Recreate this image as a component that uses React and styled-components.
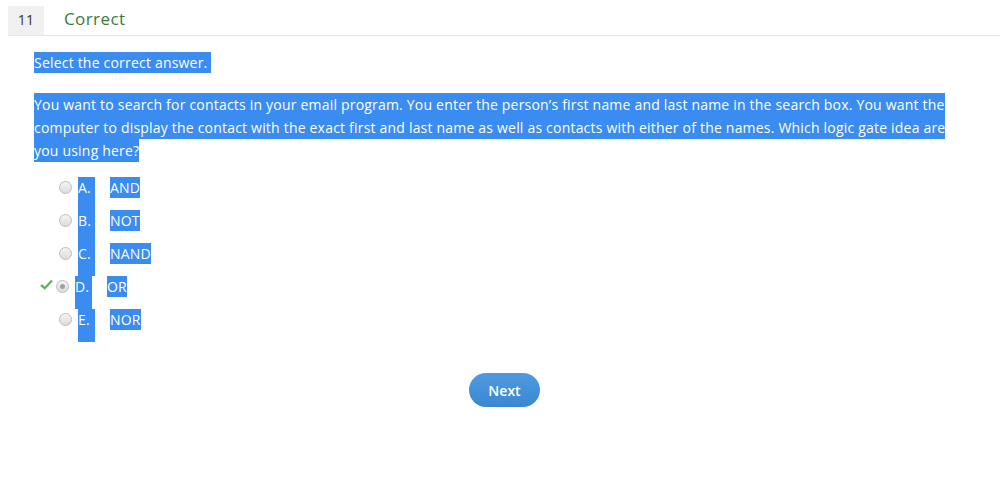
import React from 'react';
import styled, { createGlobalStyle } from 'styled-components';

const GlobalStyle = createGlobalStyle`
  body {
    margin: 0;
    background: #fff;
    font-family: "Open Sans", "Liberation Sans", sans-serif;
    letter-spacing: 0.2px;
  }
`;

const SELECT = '#3a8cf0';

const Page = styled.div`
  padding: 6px 6px 0 8px;
`;

const Header = styled.header`
  display: flex;
  align-items: center;
  height: 29px;
  border-bottom: 1px solid #e6e6e6;
`;

const Number = styled.div`
  width: 36px;
  height: 29px;
  background: #f0f0f0;
  color: #333;
  font-size: 14px;
  display: flex;
  align-items: center;
  justify-content: center;
  padding-bottom: 3px;
  box-sizing: border-box;
`;

const Status = styled.div`
  margin-left: 20px;
  color: #3c7a3a;
  font-size: 17px;
  line-height: 29px;
  padding-bottom: 4px;
  letter-spacing: 0.4px;
`;

const Content = styled.section`
  padding: 0 40px 0 26px;
`;

const Prompt = styled.p`
  margin: 16px 0 0;
  font-size: 14px;
  line-height: 21px;
  color: #fff;
`;

const Question = styled.p`
  margin: 20px 0 0;
  font-size: 14px;
  line-height: 23px;
  color: #fff;
`;

const Hl = styled.span`
  background: ${SELECT};
  padding: ${p => p.$pad || '1px 0'};
  -webkit-box-decoration-break: clone;
  box-decoration-break: clone;
`;

const Options = styled.div`
  margin-top: 15px;
  display: flex;
  flex-direction: column;
`;

const Row = styled.div`
  display: flex;
  align-items: flex-start;
  height: 33px;
  padding-left: ${p => (p.$marked ? 32 : 51)}px;
  font-size: 14px;
  color: #fff;
`;

const Check = styled.svg`
  width: 13px;
  height: 11px;
  margin: 3px 3px 0 0;
`;

const Radio = styled.span`
  width: 13px;
  height: 13px;
  margin-top: 4px;
  border-radius: 50%;
  box-sizing: border-box;
  border: 1px solid #bdbdbd;
  background: linear-gradient(#f4f4f4, #dcdcdc);
  display: flex;
  align-items: center;
  justify-content: center;
  &::after {
    content: '';
    width: 5px;
    height: 5px;
    border-radius: 50%;
    background: ${p => (p.$checked ? '#a0a0a0' : 'transparent')};
  }
`;

const Letter = styled.span`
  margin-left: 6px;
  width: 17px;
  height: 33px;
  line-height: 22px;
  background: ${SELECT};
`;

const Answer = styled.span`
  margin-left: 15px;
  line-height: 22px;
`;

const Footer = styled.div`
  display: flex;
  justify-content: center;
  margin-top: 31px;
`;

const NextButton = styled.button`
  width: 71px;
  height: 34px;
  border: none;
  border-radius: 17px;
  background: linear-gradient(#4f9be2, #3a86d0);
  color: #fff;
  font-family: "Open Sans", "Liberation Sans", sans-serif;
  font-size: 14px;
  font-weight: 600;
  cursor: pointer;
  margin-left: 1px;
`;

const options = [
  { letter: 'A.', text: 'AND' },
  { letter: 'B.', text: 'NOT' },
  { letter: 'C.', text: 'NAND' },
  { letter: 'D.', text: 'OR', chosen: true },
  { letter: 'E.', text: 'NOR' },
];

const App = () => (
  <Page>
    <GlobalStyle />
    <Header>
      <Number>11</Number>
      <Status>Correct</Status>
    </Header>
    <Content>
      <Prompt><Hl>Select the correct answer.&nbsp;</Hl></Prompt>
      <Question>
        <Hl $pad="2px 0">
          You want to search for contacts in your email program. You enter the person’s first name and last name in the search box. You want the computer to display the contact with the exact first and last name as well as contacts with either of the names. Which logic gate idea are you using here?
        </Hl>
      </Question>
    </Content>
    <Options>
      {options.map(o => (
        <Row key={o.letter} $marked={o.chosen}>
          {o.chosen && (
            <Check viewBox="0 0 13 11">
              <path d="M1 6 L4.8 9.2 L12 1.5" fill="none" stroke="#5cb85c" strokeWidth="2.4" />
            </Check>
          )}
          <Radio $checked={o.chosen} />
          <Letter>{o.letter}</Letter>
          <Answer><Hl>{o.text}</Hl></Answer>
        </Row>
      ))}
    </Options>
    <Footer>
      <NextButton>Next</NextButton>
    </Footer>
  </Page>
);

export default App;
